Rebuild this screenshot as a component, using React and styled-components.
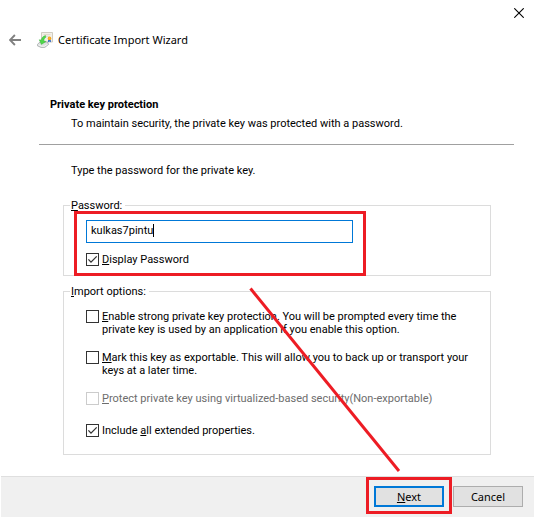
import React, { useState } from "react";
import styled, { createGlobalStyle } from "styled-components";

const GlobalStyle = createGlobalStyle`
  * {
    box-sizing: border-box;
  }
  body {
    margin: 0;
    background: #ffffff;
    color: #000000;
    font-family: Roboto, "Liberation Sans", sans-serif;
    font-size: 11px;
    line-height: 13px;
  }
`;

const Dialog = styled.main`
  position: relative;
  display: flex;
  flex-direction: column;
  margin: 0 7px 0 1px;
`;

const TitleBar = styled.div`
  display: flex;
  justify-content: flex-end;
  padding: 8px 10px 0 0;
`;

const IconButton = styled.button`
  display: block;
  padding: 0;
  border: 0;
  background: transparent;
  color: ${(props) => props.color};
  line-height: 0;
`;

const Header = styled.header`
  display: flex;
  align-items: center;
  padding: 13px 8px 0;
`;

const HeaderIcon = styled.svg`
  margin: 0 5px 0 16px;
`;

const Title = styled.h1`
  margin: 0;
  font-family: "Noto Sans", sans-serif;
  font-size: 11px;
  font-weight: 400;
  line-height: 18px;
`;

const Intro = styled.section`
  margin: 49px 20px 0 38px;
  padding: 0 0 14px 11px;
  border-bottom: 1px solid #a0a0a0;
`;

const IntroTitle = styled.h2`
  margin: 0 0 6px;
  font-size: 11px;
  font-weight: 700;
`;

const IntroText = styled.p`
  margin: 0 0 0 21px;
`;

const Form = styled.form`
  display: flex;
  flex-direction: column;
  padding: 19px 43px 12px 62px;
`;

const Prompt = styled.p`
  margin: 0 0 22px 8px;
`;

const Group = styled.fieldset`
  min-width: 0;
  margin: 0 0 9px;
  padding: ${(props) => props.$padding};
  border: 1px solid #dcdcdc;
`;

const Legend = styled.legend`
  margin-left: -16px;
  padding: 0 3px 0 1px;
`;

const Callout = styled.div`
  position: relative;
  width: ${(props) => props.$width};

  &::after {
    content: "";
    position: absolute;
    inset: ${(props) => props.$inset};
    border: 3px solid #ed1c24;
    pointer-events: none;
  }
`;

const Field = styled.div`
  position: relative;
  margin-bottom: 10px;
`;

const TextInput = styled.input`
  display: block;
  width: 100%;
  height: 23px;
  padding: 0 4px 2px;
  border: 1px solid #0078d7;
  background: #ffffff;
  color: #000000;
  caret-color: transparent;
  font: inherit;
  outline: none;
`;

const Caret = styled.span`
  position: absolute;
  top: 4px;
  left: 5px;
  border-right: 1px solid #000000;
  color: transparent;
  pointer-events: none;
`;

const Options = styled.div`
  display: flex;
  flex-direction: column;
  gap: 15px;
`;

const CheckRow = styled.label`
  display: flex;
  align-items: flex-start;
  gap: 3px;
  min-height: ${(props) => (props.$disabled ? "17px" : "0")};
  color: ${(props) => (props.$disabled ? "#6d6d6d" : "#000000")};
`;

const CheckBox = styled.span`
  position: relative;
  flex: none;
  width: 13px;
  height: 13px;

  input {
    appearance: none;
    display: block;
    width: 13px;
    height: 13px;
    margin: 0;
    border: 1px solid #333333;
    background: #ffffff;
  }
  input:disabled {
    border-color: #cccccc;
  }
  svg {
    position: absolute;
    top: 0;
    left: 0;
    pointer-events: none;
  }
`;

const Footer = styled.footer`
  display: flex;
  justify-content: flex-end;
  gap: 9px;
  padding: 9px 11px 10px;
  border-top: 1px solid #dfdfdf;
  background: #f0f0f0;
`;

const Button = styled.button`
  display: block;
  width: 70px;
  height: 21px;
  padding: 0;
  border: ${(props) => (props.$primary ? "2px solid #0078d7" : "1px solid #adadad")};
  background: #e1e1e1;
  color: #000000;
  font-family: "Noto Sans", sans-serif;
  font-size: 11px;
  line-height: 16px;
`;

const Connector = styled.svg`
  position: absolute;
  top: 0;
  left: 0;
  pointer-events: none;
`;

const Option = ({ checked, disabled, onChange, children }) => (
  <CheckRow $disabled={disabled}>
    <CheckBox>
      <input
        type="checkbox"
        checked={checked}
        disabled={disabled}
        onChange={onChange}
      />
      {checked && (
        <svg width="13" height="13" viewBox="0 0 13 13" fill="none">
          <path d="M2.4 6.4L5 9.1L10.7 3.4" stroke="#333333" strokeWidth="1.3" />
        </svg>
      )}
    </CheckBox>
    <span>{children}</span>
  </CheckRow>
);

const CertificateIcon = () => (
  <HeaderIcon width="16" height="16" viewBox="0 0 16 16" aria-hidden="true">
    <path d="M4.5 .5H15.5V10H4.5Z" fill="#f3f0e8" stroke="#c4c0b4" strokeWidth=".8" />
    <path d="M6.5 2.5H13.5M8 4.3H12.5" stroke="#ddd6c6" strokeWidth=".8" />
    <path d="M.4 12.4L3 10H10.4L11.6 12.4L7.8 15.4H4L.4 13.8Z" fill="#dde0e0" stroke="#9a9f9f" strokeWidth=".7" />
    <path d="M1.5 12.8L4.4 14.2H7.4L10.4 12.4" fill="none" stroke="#fff" strokeWidth=".7" />
    <path d="M8.6 3.6C6.2 4 4.8 5.4 4.3 8L2.2 7.8L4.4 12.4L9 9.6L6.8 8.8C7 7 7.6 6 8.8 5.4Z" fill="#4fd64a" stroke="#35ad3a" strokeWidth=".4" />
    <path d="M11.2 7.4L10.9 10.2L12.5 9.4L14 10.2L13.7 7.4Z" fill="#2f68c5" />
    <circle cx="12.5" cy="6.4" r="1.8" fill="#f6a51b" />
    <circle cx="12.3" cy="6.1" r=".7" fill="#ffc04a" />
  </HeaderIcon>
);

const App = () => {
  const [password, setPassword] = useState("kulkas7pintu");
  const [options, setOptions] = useState({
    display: true,
    strong: false,
    exportable: false,
    extended: true,
  });
  const toggle = (name) => () =>
    setOptions({ ...options, [name]: !options[name] });

  return (
    <>
      <GlobalStyle />
      <Dialog>
        <TitleBar>
          <IconButton type="button" aria-label="Close" color="#000000">
            <svg width="10" height="10" viewBox="0 0 10 10">
              <path d="M.3 .3L9.7 9.7M9.7 .3L.3 9.7" stroke="currentColor" strokeWidth="1.1" />
            </svg>
          </IconButton>
        </TitleBar>
        <Header>
          <IconButton type="button" aria-label="Back" color="#808080">
            <svg width="12" height="12" viewBox="0 0 12 12" fill="none">
              <path d="M5.9 1L1 6L5.9 11M1 6H12" stroke="currentColor" strokeWidth="1.9" />
            </svg>
          </IconButton>
          <CertificateIcon />
          <Title>Certificate Import Wizard</Title>
        </Header>

        <Intro>
          <IntroTitle>Private key protection</IntroTitle>
          <IntroText>
            To maintain security, the private key was protected with a password.
          </IntroText>
        </Intro>

        <Form id="wizard" onSubmit={(e) => e.preventDefault()}>
          <Prompt>Type the password for the private key.</Prompt>
          <Group $padding="8px 22px 9px">
            <Legend>
              <label htmlFor="password">
                <u>P</u>assword:
              </label>
            </Legend>
            <Callout $width="267px" $inset="-9px -13px -10px -12px">
              <Field>
                <TextInput
                  id="password"
                  type={options.display ? "text" : "password"}
                  value={password}
                  onChange={(e) => setPassword(e.target.value)}
                />
                <Caret aria-hidden="true">{password}</Caret>
              </Field>
              <Option checked={options.display} onChange={toggle("display")}>
                <u>D</u>isplay Password
              </Option>
            </Callout>
          </Group>

          <Group $padding="12px 8px 17px 22px">
            <Legend>
              <u>I</u>mport options:
            </Legend>
            <Options>
              <Option checked={options.strong} onChange={toggle("strong")}>
                <u>E</u>nable strong private key protection. You will be prompted
                every time the
                <br />
                private key is used by an application if you enable this option.
              </Option>
              <Option
                checked={options.exportable}
                onChange={toggle("exportable")}
              >
                <u>M</u>ark this key as exportable. This will allow you to back up
                or transport your
                <br />
                keys at a later time.
              </Option>
              <Option checked={false} disabled>
                <u>P</u>rotect private key using virtualized-based
                security(Non-exportable)
              </Option>
              <Option checked={options.extended} onChange={toggle("extended")}>
                Include <u>a</u>ll extended properties.
              </Option>
            </Options>
          </Group>
        </Form>

        <Footer>
          <Callout $width="70px" $inset="-9px -8px -7px">
            <Button type="submit" form="wizard" $primary>
              <u>N</u>ext
            </Button>
          </Callout>
          <Button type="button">Cancel</Button>
        </Footer>

        <Connector width="400" height="476" viewBox="0 0 400 476" aria-hidden="true">
          <path d="M249.5 288.5L398 471" stroke="#ed1c24" strokeWidth="3" />
        </Connector>
      </Dialog>
    </>
  );
};

export default App;
